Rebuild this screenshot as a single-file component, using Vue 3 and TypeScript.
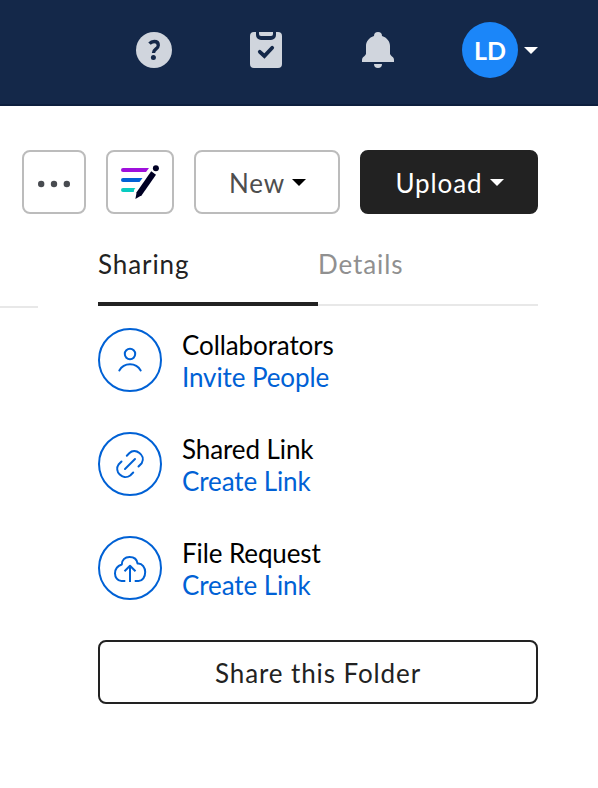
<script setup lang="ts">
interface ShareItem {
  id: 'people' | 'link' | 'upload'
  title: string
  action: string
}

const items: ShareItem[] = [
  { id: 'people', title: 'Collaborators', action: 'Invite People' },
  { id: 'link', title: 'Shared Link', action: 'Create Link' },
  { id: 'upload', title: 'File Request', action: 'Create Link' },
]
</script>

<template>
  <div class="page">
    <header class="header">
      <svg class="help" width="36" height="36" viewBox="0 0 36 36">
        <circle cx="18" cy="18" r="18" fill="#d0d5dd" />
        <path d="M13.500 11.600C15 9.900 16.700 9.500 18.200 9.500C20.800 9.500 22.300 11 22.300 13.200C22.300 17.200 17.500 16.500 17.500 21" fill="none" stroke="#142849" stroke-width="3.300" stroke-linecap="butt" />
        <circle cx="17.400" cy="25.600" r="2.500" fill="#142849" />
      </svg>
      <svg class="tasks" width="32" height="36" viewBox="0 0 32 36">
        <path d="M4 0H6V3a5 5 0 0 0 5 5H21a5 5 0 0 0 5-5V0H28a4 4 0 0 1 4 4V32a4 4 0 0 1-4 4H4a4 4 0 0 1-4-4V4a4 4 0 0 1 4-4Z" fill="#d0d5dd" />
        <path d="M9 0H23V2a2 2 0 0 1-2 2H11a2 2 0 0 1-2-2Z" fill="#d0d5dd" />
        <path d="M9.800 19.800L14.400 24L22.200 15.800" fill="none" stroke="#142849" stroke-width="3.800" stroke-linecap="round" />
      </svg>
      <svg class="bell" width="32" height="36" viewBox="0 0 32 36">
        <path d="M12 4a4 4 0 0 1 8 0C25 5.500 28 9.500 28 14V21.500C28 24 32 24.500 32 28V30H0V28C0 24.500 4 24 4 21.500V14C4 9.500 7 5.500 12 4ZM12 32H20a4 4 0 0 1-8 0Z" fill="#d0d5dd" />
      </svg>
      <div class="avatar">LD</div>
      <svg class="caret" width="14" height="7" viewBox="0 0 14 7"><path d="M0 0H14L7 7Z" fill="currentColor" /></svg>
    </header>

    <div class="toolbar">
      <button class="btn more" aria-label="More options">
        <svg width="34" height="8" viewBox="0 0 34 8" fill="#484b50">
          <circle cx="4.200" cy="4" r="3.200" /><circle cx="17" cy="4" r="3.200" /><circle cx="29.800" cy="4" r="3.200" />
        </svg>
      </button>
      <button class="btn sign" aria-label="Sign">
        <svg width="40" height="36" viewBox="0 0 40 36">
          <path d="M3 4H29L26 8H3a2 2 0 0 1 0-4Z" fill="#9f10dc" />
          <path d="M3 14H22.500L19.500 18H3a2 2 0 0 1 0-4Z" fill="#0061d5" />
          <path d="M3 24H15.500C14.300 25 13.800 26.500 13.800 28H3a2 2 0 0 1 0-4Z" fill="#08cbc0" />
          <path d="M31.200 7.300L36 10.700L21.700 31.300L15.400 35L16.600 28.200Z" fill="#000024" />
          <circle cx="35.900" cy="4.300" r="3" fill="#000024" />
        </svg>
      </button>
      <button class="btn new"><span>New</span><svg class="caret" width="14" height="7" viewBox="0 0 14 7"><path d="M0 0H14L7 7Z" fill="currentColor" /></svg></button>
      <button class="btn upload"><span>Upload</span><svg class="caret" width="14" height="7" viewBox="0 0 14 7"><path d="M0 0H14L7 7Z" fill="currentColor" /></svg></button>
    </div>

    <main class="content">
      <div class="list-edge"></div>
      <aside class="panel">
        <nav class="tabs">
          <div class="tab active">Sharing</div>
          <div class="tab">Details</div>
        </nav>
        <div class="items">
          <div v-for="item in items" :key="item.id" class="item">
            <div class="badge">
              <svg width="36" height="36" viewBox="0 0 36 36" fill="none" stroke="#0061d5" stroke-width="2" stroke-linecap="round" stroke-linejoin="round">
                <template v-if="item.id === 'people'">
                  <circle cx="18" cy="12" r="5.200" />
                  <path d="M7.300 28.500C12 20.300 24 20.300 28.700 28.500" />
                </template>
                <template v-else-if="item.id === 'link'">
                  <path d="M13 23L23 13" />
                  <path d="M14.800 9.700L17.500 7C23 1.500 34.500 9 29.700 17.200L26.500 20.500" />
                  <path d="M9.500 15.500L6.800 18.200C1.500 25.500 10.800 34.800 18.200 29.500L21.200 26.500" />
                </template>
                <template v-else>
                  <path d="M13.300 31H9.500C5.500 31 3 27 3 23.500C3 19 6 15.700 9.800 14.500C10 10 13 7 17.500 7C22 7 25 9.500 25.500 13.500C30.500 13 33.200 18 33.200 22C33.200 27 30.500 31 26.500 31H22.700" stroke-linecap="butt" />
                  <path d="M18 32V16.500M12.500 21.200L18 15.800L23.500 21.200" stroke-linecap="butt" />
                </template>
              </svg>
            </div>
            <div class="label">
              <div>{{ item.title }}</div>
              <a class="action">{{ item.action }}</a>
            </div>
          </div>
        </div>
        <button class="btn share"><span>Share this Folder</span></button>
      </aside>
    </main>
  </div>
</template>

<style>
body {
  margin: 0;
  background: #fff;
}
</style>

<style scoped>
.page {
  width: 598px;
  height: 788px;
  overflow: hidden;
  background: #fff;
  color: #222;
  font-family: Lato, sans-serif;
  font-size: 26px;
}
svg {
  display: block;
  flex: none;
}
.header {
  box-sizing: border-box;
  display: flex;
  align-items: center;
  width: 598px;
  height: 106px;
  padding: 0 0 4px 136px;
  border-bottom: 2px solid #0d1f3e;
  background: #142849;
  color: #fff;
}
.tasks {
  margin-left: 78px;
}
.bell {
  margin-left: 80px;
}
.avatar {
  width: 56px;
  height: 56px;
  margin: 0 6px 0 68px;
  border-radius: 50%;
  background: #1b86f9;
  font-size: 25px;
  font-weight: 700;
  line-height: 57px;
  text-align: center;
}
.toolbar {
  display: flex;
  gap: 20px;
  padding: 44px 0 0 22px;
}
.btn {
  box-sizing: border-box;
  display: flex;
  align-items: center;
  justify-content: center;
  height: 64px;
  margin: 0;
  padding: 0;
  border: 2px solid #bcbcbc;
  border-radius: 8px;
  background: #fff;
  color: #4e4e4e;
  font: inherit;
  letter-spacing: 0.9px;
}
.btn span {
  padding-top: 2px;
}
.btn .caret {
  margin-left: 7px;
}
.more {
  width: 64px;
  padding-top: 4px;
}
.sign {
  width: 68px;
}
.new {
  width: 146px;
  padding-left: 1px;
}
.new .caret {
  color: #000;
}
.upload {
  width: 178px;
  padding-left: 1px;
  border-color: #222;
  background: #222;
  color: #fff;
}
.content {
  display: flex;
  gap: 60px;
}
.list-edge {
  box-sizing: border-box;
  width: 38px;
  height: 94px;
  border-bottom: 2px solid #e8e8e8;
}
.panel {
  width: 440px;
  padding-top: 28px;
}
.tabs {
  display: flex;
}
.tab {
  box-sizing: border-box;
  width: 220px;
  height: 64px;
  border-bottom: 2px solid #e8e8e8;
  color: #909090;
  line-height: 45px;
  letter-spacing: 0.9px;
}
.tab.active {
  border-bottom: 4px solid #222;
  color: #222;
}
.items {
  display: grid;
  gap: 40px;
  padding: 22px 0 40px;
}
.item {
  display: flex;
  gap: 20px;
  height: 64px;
}
.badge {
  box-sizing: border-box;
  display: flex;
  align-items: center;
  justify-content: center;
  width: 64px;
  height: 64px;
  border: 2px solid #0061d5;
  border-radius: 50%;
}
.label {
  padding-top: 1px;
  color: #000;
  line-height: 32px;
  letter-spacing: -0.1px;
}
.action {
  display: block;
  color: #0061d5;
}
.share {
  width: 440px;
  border-color: #222;
  color: #222;
}
</style>
